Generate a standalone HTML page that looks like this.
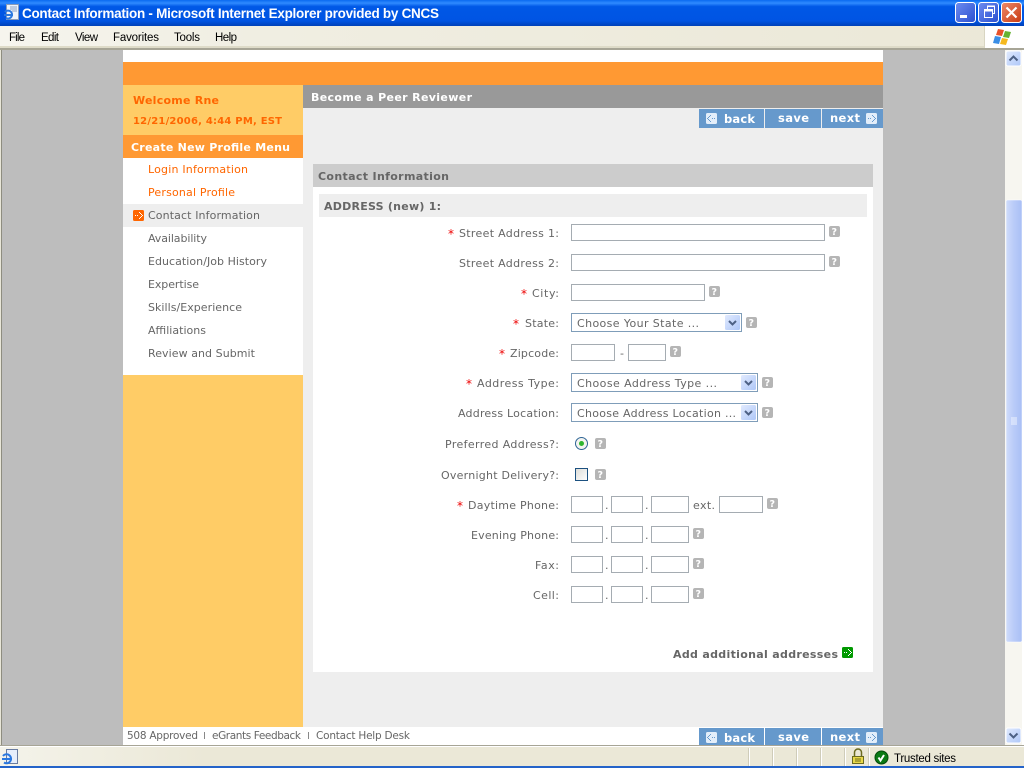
<!DOCTYPE html>
<html><head><meta charset="utf-8"><title>Contact Information</title>
<style>
html,body{margin:0;padding:0;background:#fff;overflow:hidden}
svg{display:block;position:absolute;left:0;top:0}
text{font-family:"DejaVu Sans",sans-serif;font-size:11px;fill:#666;white-space:pre}
.b{font-weight:bold}
.o{fill:#f60}
.w{fill:#fff}
.t{font-family:"Liberation Sans",sans-serif;font-size:11.5px;fill:#000}
.r{fill:#e00;font-size:12px}
.q{fill:#fff;font-weight:bold;font-size:9.5px}
.i{fill:#fff;stroke:#a5acb2}
.s{fill:#fff;stroke:#7f9db9}
</style></head><body>
<svg width="1024" height="768" viewBox="0 0 1024 768" xmlns="http://www.w3.org/2000/svg">
<defs>
<linearGradient id="tb" x1="0" y1="0" x2="0" y2="1"><stop offset="0" stop-color="#0a6af0"/><stop offset=".12" stop-color="#2f8bff"/><stop offset=".25" stop-color="#0058e6"/><stop offset=".8" stop-color="#0054e3"/><stop offset="1" stop-color="#0041b8"/></linearGradient>
<linearGradient id="mb" x1="0" y1="0" x2="1" y2="0"><stop offset="0" stop-color="#f6f5ee"/><stop offset=".25" stop-color="#f0eee2"/><stop offset="1" stop-color="#ebe8d7"/></linearGradient>
<linearGradient id="st" x1="0" y1="0" x2="1" y2="0"><stop offset="0" stop-color="#f4f3ea"/><stop offset=".2" stop-color="#ebe8d7"/><stop offset="1" stop-color="#ebe8d7"/></linearGradient>
<linearGradient id="btn" x1="0" y1="0" x2="1" y2="1"><stop offset="0" stop-color="#6d8cf0"/><stop offset="1" stop-color="#2a4fd0"/></linearGradient>
<linearGradient id="cl" x1="0" y1="0" x2="1" y2="1"><stop offset="0" stop-color="#ee8a6a"/><stop offset="1" stop-color="#c83a12"/></linearGradient>
<linearGradient id="sb" x1="0" y1="0" x2="1" y2="0"><stop offset="0" stop-color="#cfdcfb"/><stop offset=".5" stop-color="#b9cbf8"/><stop offset="1" stop-color="#a9bff5"/></linearGradient>
<linearGradient id="dd" x1="0" y1="0" x2="1" y2="1"><stop offset="0" stop-color="#e1eafe"/><stop offset="1" stop-color="#aec7f8"/></linearGradient>
<linearGradient id="cb" x1="0" y1="0" x2="1" y2="1"><stop offset="0" stop-color="#dcdcd7"/><stop offset="1" stop-color="#fff"/></linearGradient>
<path id="nx" d="M2 5h1v1H2zM4 5h1v1H4zM6 2h1v1H6zM7 3h1v1H7zM8 4h1v1H8zM9 5h1v1H9zM8 6h1v1H8zM7 7h1v1H7zM6 8h1v1H6z"/>
<path id="bk" d="M8 5h1v1H8zM6 5h1v1H6zM4 2h1v1H4zM3 3h1v1H3zM2 4h1v1H2zM1 5h1v1H1zM2 6h1v1H2zM3 7h1v1H3zM4 8h1v1H4z"/>
</defs>

<!-- title bar -->
<rect x="0" y="0" width="1024" height="26" fill="url(#tb)"/>
<rect x="6.500" y="4.500" width="12" height="15" fill="#eef3fb" stroke="#8a9bb8"/>
<path d="M10 7h7M10 9h7M12 11h5" stroke="#8fa3c4"/>
<path d="M4 15h9M5 12a4 4 0 1 1 1 6" fill="none" stroke="#2a78e0" stroke-width="2"/>
<text class="b w" x="22" y="18" textLength="417" lengthAdjust="spacing" style="font-family:'Liberation Sans',sans-serif;font-size:13.5px">Contact Information - Microsoft Internet Explorer provided by CNCS</text>

<!-- window buttons -->
<rect x="955.500" y="2.500" width="20" height="20" rx="3" fill="url(#btn)" stroke="#fff"/>
<rect x="960" y="15" width="7" height="3" fill="#fff"/>
<rect x="978.500" y="2.500" width="20" height="20" rx="3" fill="url(#btn)" stroke="#fff"/>
<path d="M984.500 9.500h8v8h-8zM987.500 9V6.500h7v7H992" fill="none" stroke="#fff"/>
<path d="M984 10h9v1.500h-9zM987 5.500h8v1.500h-8z" fill="#fff"/>
<rect x="1001.500" y="2.500" width="20" height="20" rx="3" fill="url(#cl)" stroke="#fff"/>
<path d="M1006.500 7.500l10 10M1016.500 7.500l-10 10" stroke="#fff" stroke-width="2.200"/>

<!-- menu bar -->
<rect x="0" y="26" width="1024" height="23" fill="url(#mb)"/>
<rect x="0" y="46" width="985" height="2" fill="#dedbc8"/>
<text class="t" x="9" y="41" textLength="16" lengthAdjust="spacing">File</text>
<text class="t" x="41" y="41" textLength="18" lengthAdjust="spacing">Edit</text>
<text class="t" x="75" y="41" textLength="23" lengthAdjust="spacing">View</text>
<text class="t" x="113" y="41" textLength="46" lengthAdjust="spacing">Favorites</text>
<text class="t" x="174" y="41" textLength="26" lengthAdjust="spacing">Tools</text>
<text class="t" x="215" y="41" textLength="22" lengthAdjust="spacing">Help</text>
<rect x="985" y="26" width="39" height="22" fill="#fff"/>
<rect x="984" y="26" width="1" height="22" fill="#d8d5c2"/>
<path d="M998 29l6 1-2 6-6-1z" fill="#e8522a"/>
<path d="M1005 31l6 1-2 6-6-1z" fill="#66b332"/>
<path d="M995 36l6 1-2 7-6-1z" fill="#3a8ee6"/>
<path d="M1002 38l6 1-2 6-6-1z" fill="#f5b91e"/>

<!-- viewport -->
<rect x="0" y="48" width="1024" height="2" fill="#a7a596"/>
<rect x="0" y="50" width="1" height="695" fill="#e8e6d8"/>
<rect x="1" y="50" width="1" height="695" fill="#8e8d80"/>
<rect x="2" y="50" width="1003" height="695" fill="#bdbdbd"/>
<rect x="123" y="50" width="760" height="695" fill="#fff"/>
<rect x="123" y="62" width="760" height="23" fill="#f93"/>
<rect x="123" y="85" width="180" height="642" fill="#fc6"/>
<rect x="303" y="85" width="580" height="23" fill="#999"/>
<rect x="303" y="108" width="580" height="619" fill="#eee"/>

<!-- sidebar -->
<text class="b o" x="133" y="104" textLength="86" lengthAdjust="spacing">Welcome Rne</text>
<text class="b o" x="133" y="124" textLength="149" lengthAdjust="spacing" style="font-size:10px">12/21/2006, 4:44 PM, EST</text>
<rect x="123" y="135" width="180" height="23" fill="#f93"/>
<text class="b w" x="131" y="151" textLength="159" lengthAdjust="spacing">Create New Profile Menu</text>
<rect x="123" y="158" width="180" height="217" fill="#fff"/>
<rect x="123" y="204" width="180" height="23" fill="#eee"/>
<text class="o" x="148" y="173" textLength="100" lengthAdjust="spacing">Login Information</text>
<text class="o" x="148" y="196" textLength="87" lengthAdjust="spacing">Personal Profile</text>
<rect x="133" y="210" width="11" height="11" rx="1.500" fill="#f60"/>
<use href="#nx" x="133" y="210" fill="#fff"/>
<text x="148" y="219" textLength="112" lengthAdjust="spacing">Contact Information</text>
<text x="148" y="242" textLength="59" lengthAdjust="spacing">Availability</text>
<text x="148" y="265" textLength="119" lengthAdjust="spacing">Education/Job History</text>
<text x="148" y="288" textLength="51" lengthAdjust="spacing">Expertise</text>
<text x="148" y="311" textLength="94" lengthAdjust="spacing">Skills/Experience</text>
<text x="148" y="334" textLength="58" lengthAdjust="spacing">Affiliations</text>
<text x="148" y="357" textLength="107" lengthAdjust="spacing">Review and Submit</text>

<!-- header -->
<text class="b w" x="311" y="101" textLength="161" lengthAdjust="spacing">Become a Peer Reviewer</text>

<!-- top buttons -->
<rect x="699" y="109" width="65" height="19" fill="#69c"/>
<rect x="765" y="109" width="56" height="19" fill="#69c"/>
<rect x="822" y="109" width="61" height="19" fill="#69c"/>
<rect x="706" y="113" width="11" height="11" rx="1.500" fill="#e3eefa"/>
<use href="#bk" x="706" y="113" fill="#69c"/>
<text class="b w" x="724" y="123" textLength="31" lengthAdjust="spacing" style="font-size:11.500px">back</text>
<text class="b w" x="778" y="122" textLength="31" lengthAdjust="spacing" style="font-size:11.500px">save</text>
<text class="b w" x="830" y="122" textLength="30" lengthAdjust="spacing" style="font-size:11.500px">next</text>
<rect x="866" y="113" width="11" height="11" rx="1.500" fill="#e3eefa"/>
<use href="#nx" x="866" y="113" fill="#69c"/>

<!-- panel -->
<rect x="313" y="164" width="560" height="508" fill="#fff"/>
<rect x="313" y="164" width="560" height="23" fill="#ccc"/>
<text class="b" x="318" y="180" textLength="131" lengthAdjust="spacing">Contact Information</text>
<rect x="319" y="194" width="548" height="23" fill="#eee"/>
<text class="b" x="324" y="210" textLength="117" lengthAdjust="spacing">ADDRESS (new) 1:</text>

<!-- labels -->
<text class="r" x="448" y="238">*</text>
<text x="459" y="237" textLength="100" lengthAdjust="spacing">Street Address 1:</text>
<text x="459" y="267" textLength="100" lengthAdjust="spacing">Street Address 2:</text>
<text class="r" x="521" y="298">*</text>
<text x="532" y="297" textLength="27" lengthAdjust="spacing">City:</text>
<text class="r" x="513" y="328">*</text>
<text x="525" y="327" textLength="34" lengthAdjust="spacing">State:</text>
<text class="r" x="499" y="358">*</text>
<text x="510" y="357" textLength="49" lengthAdjust="spacing">Zipcode:</text>
<text class="r" x="466" y="388">*</text>
<text x="477" y="387" textLength="82" lengthAdjust="spacing">Address Type:</text>
<text x="458" y="417" textLength="101" lengthAdjust="spacing">Address Location:</text>
<text x="445" y="448" textLength="114" lengthAdjust="spacing">Preferred Address?:</text>
<text x="441" y="479" textLength="118" lengthAdjust="spacing">Overnight Delivery?:</text>
<text class="r" x="457" y="510">*</text>
<text x="468" y="509" textLength="91" lengthAdjust="spacing">Daytime Phone:</text>
<text x="471" y="539" textLength="88" lengthAdjust="spacing">Evening Phone:</text>
<text x="535" y="569" textLength="24" lengthAdjust="spacing">Fax:</text>
<text x="533" y="599" textLength="26" lengthAdjust="spacing">Cell:</text>

<!-- inputs -->
<rect class="i" x="571.500" y="224.500" width="253" height="16"/>
<rect class="i" x="571.500" y="254.500" width="253" height="16"/>
<rect class="i" x="571.500" y="284.500" width="133" height="16"/>
<rect class="i" x="571.500" y="344.500" width="43" height="16"/>
<text x="620" y="357">-</text>
<rect class="i" x="628.500" y="344.500" width="37" height="16"/>

<!-- selects -->
<rect class="s" x="571.500" y="313.500" width="170" height="18"/>
<text x="577" y="327" textLength="122" lengthAdjust="spacing">Choose Your State ...</text>
<rect x="725" y="315" width="15" height="15" rx="1.500" fill="url(#dd)"/>
<path d="M729 321l3.500 3.500 3.500-3.500" fill="none" stroke="#4d6185" stroke-width="2"/>
<rect class="s" x="571.500" y="373.500" width="186" height="18"/>
<text x="577" y="387" textLength="140" lengthAdjust="spacing">Choose Address Type ...</text>
<rect x="741" y="375" width="15" height="15" rx="1.500" fill="url(#dd)"/>
<path d="M745 381l3.500 3.500 3.500-3.500" fill="none" stroke="#4d6185" stroke-width="2"/>
<rect class="s" x="571.500" y="403.500" width="186" height="18"/>
<text x="577" y="417" textLength="159" lengthAdjust="spacing">Choose Address Location ...</text>
<rect x="741" y="405" width="15" height="15" rx="1.500" fill="url(#dd)"/>
<path d="M745 411l3.500 3.500 3.500-3.500" fill="none" stroke="#4d6185" stroke-width="2"/>

<!-- radio / check -->
<circle cx="581.500" cy="443.500" r="6" fill="#f4f4f0" stroke="#2f6596"/>
<circle cx="581.500" cy="443.500" r="2.500" fill="#2fb52f"/>
<rect x="575.500" y="468.500" width="12" height="12" fill="url(#cb)" stroke="#1c5180"/>

<!-- phones -->
<rect class="i" x="571.500" y="496.500" width="31" height="16"/><text x="605" y="509">.</text>
<rect class="i" x="611.500" y="496.500" width="31" height="16"/><text x="645" y="509">.</text>
<rect class="i" x="651.500" y="496.500" width="37" height="16"/>
<text x="693" y="509" textLength="22" lengthAdjust="spacing">ext.</text>
<rect class="i" x="719.500" y="496.500" width="43" height="16"/>
<rect class="i" x="571.500" y="526.500" width="31" height="16"/><text x="605" y="539">.</text>
<rect class="i" x="611.500" y="526.500" width="31" height="16"/><text x="645" y="539">.</text>
<rect class="i" x="651.500" y="526.500" width="37" height="16"/>
<rect class="i" x="571.500" y="556.500" width="31" height="16"/><text x="605" y="569">.</text>
<rect class="i" x="611.500" y="556.500" width="31" height="16"/><text x="645" y="569">.</text>
<rect class="i" x="651.500" y="556.500" width="37" height="16"/>
<rect class="i" x="571.500" y="586.500" width="31" height="16"/><text x="605" y="599">.</text>
<rect class="i" x="611.500" y="586.500" width="31" height="16"/><text x="645" y="599">.</text>
<rect class="i" x="651.500" y="586.500" width="37" height="16"/>

<!-- help icons -->
<rect x="829" y="226" width="11" height="11" rx="2" fill="#b5b5b5"/><text class="q" x="831.500" y="235">?</text>
<rect x="829" y="256" width="11" height="11" rx="2" fill="#b5b5b5"/><text class="q" x="831.500" y="265">?</text>
<rect x="709" y="286" width="11" height="11" rx="2" fill="#b5b5b5"/><text class="q" x="711.500" y="295">?</text>
<rect x="746" y="317" width="11" height="11" rx="2" fill="#b5b5b5"/><text class="q" x="748.500" y="326">?</text>
<rect x="670" y="346" width="11" height="11" rx="2" fill="#b5b5b5"/><text class="q" x="672.500" y="355">?</text>
<rect x="762" y="377" width="11" height="11" rx="2" fill="#b5b5b5"/><text class="q" x="764.500" y="386">?</text>
<rect x="762" y="407" width="11" height="11" rx="2" fill="#b5b5b5"/><text class="q" x="764.500" y="416">?</text>
<rect x="595" y="438" width="11" height="11" rx="2" fill="#b5b5b5"/><text class="q" x="597.500" y="447">?</text>
<rect x="595" y="469" width="11" height="11" rx="2" fill="#b5b5b5"/><text class="q" x="597.500" y="478">?</text>
<rect x="767" y="498" width="11" height="11" rx="2" fill="#b5b5b5"/><text class="q" x="769.500" y="507">?</text>
<rect x="693" y="528" width="11" height="11" rx="2" fill="#b5b5b5"/><text class="q" x="695.500" y="537">?</text>
<rect x="693" y="558" width="11" height="11" rx="2" fill="#b5b5b5"/><text class="q" x="695.500" y="567">?</text>
<rect x="693" y="588" width="11" height="11" rx="2" fill="#b5b5b5"/><text class="q" x="695.500" y="597">?</text>

<!-- add -->
<text class="b" x="673" y="658" textLength="165" lengthAdjust="spacing">Add additional addresses</text>
<rect x="842" y="647" width="11" height="11" rx="1.500" fill="#090"/>
<use href="#nx" x="842" y="647" fill="#fff"/>

<!-- footer -->
<text x="127" y="739" textLength="71" lengthAdjust="spacing" style="font-size:10.500px">508 Approved</text>
<rect x="204" y="732" width="1" height="7" fill="#888"/>
<text x="212" y="739" textLength="89" lengthAdjust="spacing" style="font-size:10.500px">eGrants Feedback</text>
<rect x="308" y="732" width="1" height="7" fill="#888"/>
<text x="316" y="739" textLength="94" lengthAdjust="spacing" style="font-size:10.500px">Contact Help Desk</text>

<!-- bottom buttons -->
<rect x="699" y="728" width="65" height="17" fill="#69c"/>
<rect x="765" y="728" width="56" height="17" fill="#69c"/>
<rect x="822" y="728" width="61" height="17" fill="#69c"/>
<rect x="706" y="732" width="11" height="11" rx="1.500" fill="#e3eefa"/>
<use href="#bk" x="706" y="732" fill="#69c"/>
<text class="b w" x="724" y="742" textLength="31" lengthAdjust="spacing" style="font-size:11.500px">back</text>
<text class="b w" x="778" y="741" textLength="31" lengthAdjust="spacing" style="font-size:11.500px">save</text>
<text class="b w" x="830" y="741" textLength="30" lengthAdjust="spacing" style="font-size:11.500px">next</text>
<rect x="866" y="732" width="11" height="11" rx="1.500" fill="#e3eefa"/>
<use href="#nx" x="866" y="732" fill="#69c"/>

<!-- scrollbar -->
<rect x="1005" y="50" width="17" height="695" fill="#f7f6f0"/>
<rect x="1022" y="50" width="2" height="695" fill="#fff"/>
<rect x="1006" y="200" width="16" height="442" rx="1.500" fill="url(#sb)" stroke="#fff" stroke-width=".5"/>
<path d="M1011 418h6M1011 420h6M1011 422h6M1011 424h6" stroke="#eef3fe"/>
<rect x="1006" y="51" width="15" height="15" rx="2" fill="url(#dd)" stroke="#fff"/>
<path d="M1009.500 60.500l4-4 4 4" fill="none" stroke="#4d6185" stroke-width="2"/>
<rect x="1006" y="728" width="15" height="15" rx="2" fill="url(#dd)" stroke="#fff"/>
<path d="M1009.500 733.500l4 4 4-4" fill="none" stroke="#4d6185" stroke-width="2"/>

<!-- status bar -->
<rect x="0" y="745" width="1024" height="2" fill="#fff"/>
<rect x="0" y="745" width="1024" height="1" fill="#a7a596"/>
<rect x="0" y="747" width="1024" height="19" fill="url(#st)"/>
<rect x="0" y="766" width="1024" height="2" fill="#2463c9"/>
<rect x="6.500" y="749.500" width="11" height="14" fill="#e6eefb" stroke="#6a7ca0"/>
<path d="M2 759h10M3 756a4.500 4.500 0 1 1 1 6.500" fill="none" stroke="#2a78e0" stroke-width="2"/>
<path d="M749.500 748v18M773.500 748v18M797.500 748v18M821.500 748v18M845.500 748v18M869.500 748v18" stroke="#fff"/>
<path d="M748.500 748v18M772.500 748v18M796.500 748v18M820.500 748v18M844.500 748v18M868.500 748v18" stroke="#cfccb9"/>
<path d="M854.500 756v-3.500a3.500 3.500 0 0 1 7 0v3.500" fill="none" stroke="#6b6b20" stroke-width="1.500"/>
<rect x="852.500" y="756.500" width="11" height="7" fill="#e8d84a" stroke="#6b6b20"/>
<path d="M855 759h6M855 761h6" stroke="#6b6b20"/>
<circle cx="881.500" cy="757.500" r="6.500" fill="#0a7a14" stroke="#044a0a"/>
<path d="M878.500 757.500l2 3 3.500-5.500" fill="none" stroke="#fff" stroke-width="2"/>
<text class="t" x="894" y="762" textLength="62" lengthAdjust="spacing">Trusted sites</text>
</svg>
</body></html>
